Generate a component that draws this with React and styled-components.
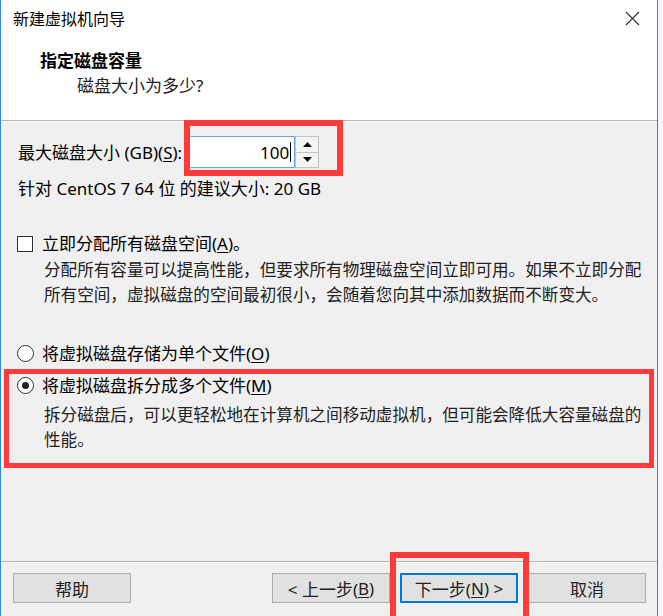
import React from 'react';
import styled, { createGlobalStyle } from 'styled-components';

const GlobalStyle = createGlobalStyle`
  html, body {
    margin: 0;
    padding: 0;
    background: #f4f6f9;
    overflow: hidden;
  }
  body {
    font-family: "Noto Sans", "Noto Sans CJK SC", sans-serif;
    color: #000;
  }
`;

const Window = styled.div`
  width: 658px;
  height: 616px;
  box-sizing: border-box;
  border-left: 1px solid #2f86dc;
  border-right: 1px solid #2f86dc;
  display: flex;
  flex-direction: column;
  background: #f0f0f0;
`;

const Top = styled.div`
  background: #fff;
  border-bottom: 1px solid #b4b4b4;
`;

const TitleBar = styled.div`
  height: 36px;
  display: flex;
  align-items: center;
  justify-content: space-between;
  padding: 0 17px 0 12px;
  font-size: 16px;
`;

const Header = styled.div`
  height: 84px;
  box-sizing: border-box;
  padding: 12px 0 0 39px;
  line-height: 25px;
  font-size: 17px;
`;

const Heading = styled.div`
  font-weight: 700;
`;

const Sub = styled.div`
  margin-left: 37px;
  color: #222;
`;

const Body = styled.div`
  flex: 1;
  border-top: 1px solid #fbfbfb;
  padding-left: 16px;
  font-size: 17px;
  line-height: 25px;
`;

const SizeRow = styled.div`
  display: flex;
  align-items: center;
  gap: 8px;
  margin-top: 14px;
  padding-left: 1px;
`;

const Highlight = styled.div`
  position: relative;
  &::after {
    content: '';
    position: absolute;
    top: ${p => p.$t}px;
    right: ${p => p.$r}px;
    bottom: ${p => p.$b}px;
    left: ${p => p.$l}px;
    border: ${p => p.$w || 5}px solid #ff3a3a;
    pointer-events: none;
  }
`;

const SpinBox = styled.div`
  display: flex;
`;

const NumberField = styled.div`
  width: 100px;
  height: 30px;
  background: #fff;
  border: 1px solid #6aa5df;
  border-left-color: #fff;
  display: flex;
  align-items: center;
  justify-content: flex-end;
  padding-right: 3px;
  box-sizing: content-box;
`;

const Caret = styled.span`
  display: inline-block;
  width: 1px;
  height: 20px;
  background: #000;
  margin-left: 1px;
`;

const Spinner = styled.div`
  width: 22px;
  display: flex;
  flex-direction: column;
  border: 1px solid #c4c4c4;
  background: #f4f4f4;
`;

const SpinButton = styled.div`
  flex: 1;
  display: flex;
  align-items: center;
  justify-content: center;
  & + & {
    border-top: 1px solid #c4c4c4;
  }
`;

const Hint = styled.div`
  margin-top: 8px;
  padding-left: 1px;
`;

const OptionRow = styled.div`
  display: flex;
  align-items: center;
  gap: ${p => p.$gap || 8}px;
  margin-top: ${p => p.$mt}px;
`;

const CheckBox = styled.span`
  width: 14px;
  height: 14px;
  border: 1px solid #333;
  background: #fff;
  flex: none;
`;

const Radio = styled.span`
  width: 15px;
  height: 15px;
  border: 1px solid #333;
  border-radius: 50%;
  background: #fff;
  flex: none;
  display: flex;
  align-items: center;
  justify-content: center;
  &::after {
    content: '';
    width: 7px;
    height: 7px;
    border-radius: 50%;
    background: ${p => (p.$on ? '#222' : 'transparent')};
  }
`;

const Desc = styled.p`
  margin: ${p => p.$mt}px 0 0 27px;
  white-space: nowrap;
  color: #222;
  font-size: 16.6px;
`;

const Footer = styled.div`
  height: 55px;
  box-sizing: border-box;
  border-top: 1px solid #b4b4b4;
  box-shadow: inset 0 1px 0 #fbfbfb;
  padding: 11px 11px 0 12px;
  display: flex;
  gap: 10px;
`;

const Button = styled.div`
  width: 118px;
  height: 30px;
  box-sizing: border-box;
  border: 1px solid ${p => (p.$default ? '#0078d7' : '#adadad')};
  box-shadow: ${p => (p.$default ? 'inset 0 0 0 1px #0078d7' : 'none')};
  background: #e1e1e1;
  display: flex;
  align-items: center;
  justify-content: center;
  font-size: 17px;
  color: #222;
  margin-left: ${p => (p.$push ? 'auto' : '0')};
`;

const Key = styled.u`
  text-underline-offset: 2px;
`;

function CloseIcon() {
  return (
    <svg width="15" height="15" viewBox="0 0 15 15">
      <path d="M1 1L14 14M14 1L1 14" stroke="#333" strokeWidth="1.1" />
    </svg>
  );
}

function Arrow({ up }) {
  return (
    <svg width="9" height="5" viewBox="0 0 9 5">
      <path d={up ? 'M0 5L4.5 0L9 5Z' : 'M0 0L4.5 5L9 0Z'} fill="#111" />
    </svg>
  );
}

export default function App() {
  return (
    <>
      <GlobalStyle />
      <Window>
        <Top>
          <TitleBar>
            <span>新建虚拟机向导</span>
            <CloseIcon />
          </TitleBar>
          <Header>
            <Heading>指定磁盘容量</Heading>
            <Sub>磁盘大小为多少?</Sub>
          </Header>
        </Top>

        <Body>
          <SizeRow>
            <span>
              最大磁盘大小 (GB)(<Key>S</Key>):
            </span>
            <Highlight $t={-16} $r={-24} $b={-8} $l={-6} $w={6}>
              <SpinBox>
                <NumberField>
                  100<Caret />
                </NumberField>
                <Spinner>
                  <SpinButton><Arrow up /></SpinButton>
                  <SpinButton><Arrow /></SpinButton>
                </Spinner>
              </SpinBox>
            </Highlight>
          </SizeRow>
          <Hint>针对 CentOS 7 64 位 的建议大小: 20 GB</Hint>

          <OptionRow $mt={30} $gap={9}>
            <CheckBox />
            <span>
              立即分配所有磁盘空间(<Key>A</Key>)。
            </span>
          </OptionRow>
          <Desc $mt={1}>
            分配所有容量可以提高性能，但要求所有物理磁盘空间立即可用。如果不立即分配
            <br />
            所有空间，虚拟磁盘的空间最初很小，会随着您向其中添加数据而不断变大。
          </Desc>

          <OptionRow $mt={34}>
            <Radio />
            <span>
              将虚拟磁盘存储为单个文件(<Key>O</Key>)
            </span>
          </OptionRow>

          <Highlight $t={-4} $r={3} $b={-16} $l={-13}>
            <OptionRow $mt={7}>
              <Radio $on />
              <span>
                将虚拟磁盘拆分成多个文件(<Key>M</Key>)
              </span>
            </OptionRow>
            <Desc $mt={4}>
              拆分磁盘后，可以更轻松地在计算机之间移动虚拟机，但可能会降低大容量磁盘的
              <br />
              性能。
            </Desc>
          </Highlight>
        </Body>

        <Footer>
          <Button>帮助</Button>
          <Button $push>
            &lt; 上一步(<Key>B</Key>)
          </Button>
          <Highlight $t={-21} $r={-11} $b={-20} $l={-10} $w={6}>
            <Button $default>
              下一步(<Key>N</Key>) &gt;
            </Button>
          </Highlight>
          <Button>取消</Button>
        </Footer>
      </Window>
    </>
  );
}
